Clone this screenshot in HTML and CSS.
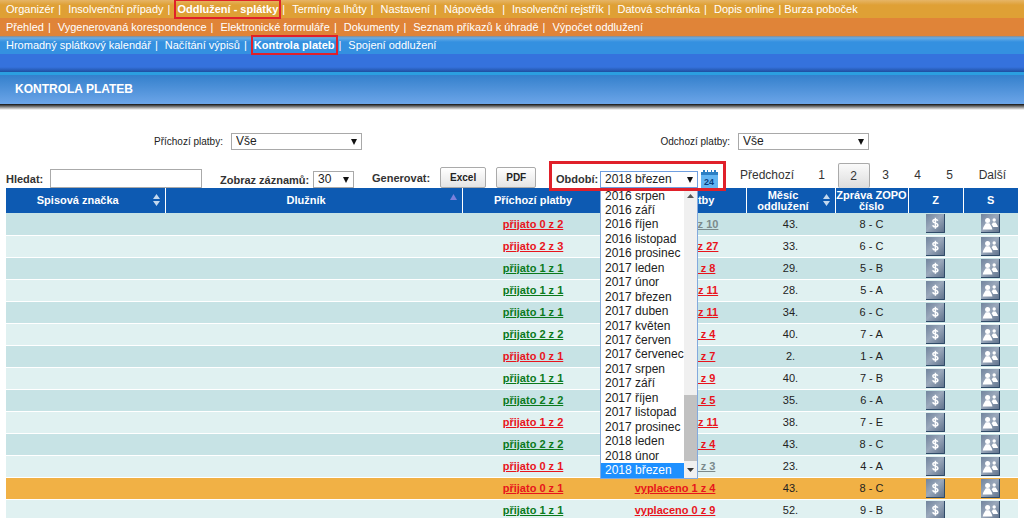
FILE: index.html
```html
<!DOCTYPE html>
<html lang="cs">
<head>
<meta charset="utf-8">
<title>Kontrola plateb</title>
<link rel="stylesheet" href="styles.css">
</head>
<body>
<svg class="sprite" aria-hidden="true">
  <defs>
    <linearGradient id="tile" x1="0" y1="0" x2="1" y2="1"><stop offset="0" stop-color="#71849d"/><stop offset=".45" stop-color="#9aa8bb"/><stop offset="1" stop-color="#5b6e88"/></linearGradient>
    <symbol id="pay" viewBox="0 0 19 19">
      <path fill="url(#tile)" d="M0 0h19v19H0z"/><path fill="none" stroke="#2f4a68" d="M0 18.500h18.500V0"/>
      <path fill="none" stroke="#fff" stroke-width="1.500" d="M11.800 6.800C11.300 5.700 10.400 5.500 9.300 5.500 7.900 5.500 6.900 6.100 6.900 7.200c0 2.500 5 1.400 5 3.900 0 1.300-1.100 1.900-2.500 1.900-1.400 0-2.400-.6-2.700-1.700M9.400 3.800v10.900"/>
    </symbol>
    <symbol id="people" viewBox="0 0 19 19">
      <path fill="url(#tile)" d="M0 0h19v19H0z"/><path fill="none" stroke="#2f4a68" d="M0 18.500h18.500V0"/>
      <g fill="#fff"><circle cx="6.600" cy="6.400" r="2.500"/><path d="M1.800 15.500c.2-2.600 1.800-3.800 3-6.200h3.600c1.200 2.400 2.800 3.600 3 6.200z"/><circle cx="13.200" cy="6" r="1.700"/><path d="M11.900 8.500h2.700c.9 1.600 2.300 2.700 2.400 4.500h-4.800c-.4-1-1-1.800-1.600-2.500.5-.7 1-1.300 1.300-2z"/></g>
    </symbol>
  </defs>
</svg>
<header>
  <nav class="menu menu-main">
    <a href="#">Organizér</a><i>|</i><a href="#">Insolvenční případy</a><i>|</i><a href="#" class="marked">Oddlužení - splátky</a><i>|</i><a href="#">Termíny a lhůty</a><i>|</i><a href="#">Nastavení</a><i>|</i><a href="#">Nápověda</a><i class="wide">|</i><a href="#">Insolvenční rejstřík</a><i>|</i><a href="#">Datová schránka</a><i>|</i><a href="#">Dopis online</a><i class="tight">|</i><a href="#">Burza poboček</a>
  </nav>
  <nav class="menu menu-sub">
    <a href="#">Přehled</a><i>|</i><a href="#">Vygenerovaná korespondence</a><i>|</i><a href="#">Elektronické formuláře</a><i>|</i><a href="#">Dokumenty</a><i>|</i><a href="#">Seznam příkazů k úhradě</a><i>|</i><a href="#">Výpočet oddlužení</a>
  </nav>
  <nav class="menu menu-page">
    <a href="#">Hromadný splátkový kalendář</a><i>|</i><a href="#">Načítání výpisů</a><i>|</i><a href="#" class="marked">Kontrola plateb</a><i>|</i><a href="#">Spojení oddlužení</a>
  </nav>
  <div class="band"></div>
  <h1>KONTROLA PLATEB</h1>
  <div class="shadow"></div>
</header>
<main>
  <div class="filters">
    <div class="filter"><label for="in">Příchozí platby:</label><span class="pick"><select id="in"><option>Vše</option></select></span></div>
    <div class="filter"><label for="out">Odchozí platby:</label><span class="pick"><select id="out"><option>Vše</option></select></span></div>
  </div>
  <div class="toolbar">
    <div class="search"><label for="q">Hledat:</label><input id="q" type="text"></div>
    <div class="count"><label for="n">Zobraz záznamů:</label><span class="pick"><select id="n"><option>30</option></select></span></div>
    <div class="export"><span>Generovat:</span><button type="button">Excel</button><button type="button">PDF</button></div>
    <div class="period">
      <label for="per">Období:</label>
      <div class="period-pick">
        <span class="pick"><select id="per"><option>2018 březen</option></select></span>
        <div class="popup">
          <ul class="options" role="listbox" aria-label="Období">
            <li role="option">2016 srpen</li><li role="option">2016 září</li><li role="option">2016 říjen</li><li role="option">2016 listopad</li><li role="option">2016 prosinec</li>
            <li role="option">2017 leden</li><li role="option">2017 únor</li><li role="option">2017 březen</li><li role="option">2017 duben</li><li role="option">2017 květen</li>
            <li role="option">2017 červen</li><li role="option">2017 červenec</li><li role="option">2017 srpen</li><li role="option">2017 září</li><li role="option">2017 říjen</li>
            <li role="option">2017 listopad</li><li role="option">2017 prosinec</li><li role="option">2018 leden</li><li role="option">2018 únor</li><li role="option" aria-selected="true" class="selected">2018 březen</li>
          </ul>
          <div class="scroll">
            <svg width="13" height="13" viewBox="0 0 13 13"><path fill="#555" d="M3 9l3.500-4L10 9z"/></svg>
            <div class="thumb"></div>
            <svg width="13" height="17" viewBox="0 0 13 17"><path fill="#333" d="M3 7l3.500 4L10 7z"/></svg>
          </div>
        </div>
      </div>
      <svg class="calendar" width="17" height="18" viewBox="0 0 17 18"><path fill="#2a7fc4" d="M0 2h17v4H0z"/><path fill="#2a7fc4" d="M2 0h2v3H2zM6 0h1v3H6zM10 0h1v3h-1zM13 0h2v3h-2z"/><path fill="#62b5f2" d="M0 5h17v13H0z"/><text x="8" y="15" text-anchor="middle">24</text></svg>
    </div>
    <nav class="pages"><a href="#" class="prev">Předchozí</a><a href="#" class="page">1</a><a href="#" class="page current">2</a><a href="#" class="page">3</a><a href="#" class="page">4</a><a href="#" class="page">5</a><a href="#" class="next">Další</a></nav>
  </div>
  <table>
    <colgroup><col class="c-file"><col class="c-debtor"><col class="c-pay"><col class="c-pay"><col class="c-month"><col class="c-report"><col class="c-icon"><col class="c-icon"></colgroup>
    <thead><tr>
      <th class="sortable">Spisová značka<svg class="sort" width="7" height="12" viewBox="0 0 7 12"><path fill="#c3d8ee" d="M0 5l3.500-5L7 5zM0 7h7l-3.500 5z"/></svg></th>
      <th class="sortable">Dlužník<svg class="sort" width="7" height="12" viewBox="0 0 7 12"><path fill="#7a80dc" d="M0 6l3.500-6L7 6z"/></svg></th>
      <th>Příchozí platby</th><th>Odchozí platby</th>
      <th class="sortable">Měsíc oddlužení<svg class="sort" width="7" height="12" viewBox="0 0 7 12"><path fill="#c3d8ee" d="M0 5l3.500-5L7 5zM0 7h7l-3.500 5z"/></svg></th>
      <th>Zpráva ZOPO číslo</th><th>Z</th><th>S</th>
    </tr></thead>
    <tbody>
      <tr><td></td><td></td><td><a href="#" class="bad">přijato 0 z 2</a></td><td><a href="#" class="none">vyplaceno 0 z 10</a></td><td>43.</td><td>8 - C</td><td><svg class="icon"><use href="#pay"/></svg></td><td><svg class="icon"><use href="#people"/></svg></td></tr>
      <tr><td></td><td></td><td><a href="#" class="bad">přijato 2 z 3</a></td><td><a href="#" class="bad">vyplaceno 0 z 27</a></td><td>33.</td><td>6 - C</td><td><svg class="icon"><use href="#pay"/></svg></td><td><svg class="icon"><use href="#people"/></svg></td></tr>
      <tr><td></td><td></td><td><a href="#" class="good">přijato 1 z 1</a></td><td><a href="#" class="bad">vyplaceno 0 z 8</a></td><td>29.</td><td>5 - B</td><td><svg class="icon"><use href="#pay"/></svg></td><td><svg class="icon"><use href="#people"/></svg></td></tr>
      <tr><td></td><td></td><td><a href="#" class="good">přijato 1 z 1</a></td><td><a href="#" class="bad">vyplaceno 0 z 11</a></td><td>28.</td><td>5 - A</td><td><svg class="icon"><use href="#pay"/></svg></td><td><svg class="icon"><use href="#people"/></svg></td></tr>
      <tr><td></td><td></td><td><a href="#" class="good">přijato 1 z 1</a></td><td><a href="#" class="bad">vyplaceno 0 z 11</a></td><td>34.</td><td>6 - C</td><td><svg class="icon"><use href="#pay"/></svg></td><td><svg class="icon"><use href="#people"/></svg></td></tr>
      <tr><td></td><td></td><td><a href="#" class="good">přijato 2 z 2</a></td><td><a href="#" class="bad">vyplaceno 0 z 4</a></td><td>40.</td><td>7 - A</td><td><svg class="icon"><use href="#pay"/></svg></td><td><svg class="icon"><use href="#people"/></svg></td></tr>
      <tr><td></td><td></td><td><a href="#" class="bad">přijato 0 z 1</a></td><td><a href="#" class="bad">vyplaceno 0 z 7</a></td><td>2.</td><td>1 - A</td><td><svg class="icon"><use href="#pay"/></svg></td><td><svg class="icon"><use href="#people"/></svg></td></tr>
      <tr><td></td><td></td><td><a href="#" class="good">přijato 1 z 1</a></td><td><a href="#" class="bad">vyplaceno 0 z 9</a></td><td>40.</td><td>7 - B</td><td><svg class="icon"><use href="#pay"/></svg></td><td><svg class="icon"><use href="#people"/></svg></td></tr>
      <tr><td></td><td></td><td><a href="#" class="good">přijato 2 z 2</a></td><td><a href="#" class="bad">vyplaceno 0 z 5</a></td><td>35.</td><td>6 - A</td><td><svg class="icon"><use href="#pay"/></svg></td><td><svg class="icon"><use href="#people"/></svg></td></tr>
      <tr><td></td><td></td><td><a href="#" class="bad">přijato 1 z 2</a></td><td><a href="#" class="bad">vyplaceno 0 z 11</a></td><td>38.</td><td>7 - E</td><td><svg class="icon"><use href="#pay"/></svg></td><td><svg class="icon"><use href="#people"/></svg></td></tr>
      <tr><td></td><td></td><td><a href="#" class="good">přijato 2 z 2</a></td><td><a href="#" class="bad">vyplaceno 0 z 4</a></td><td>43.</td><td>8 - C</td><td><svg class="icon"><use href="#pay"/></svg></td><td><svg class="icon"><use href="#people"/></svg></td></tr>
      <tr><td></td><td></td><td><a href="#" class="bad">přijato 0 z 1</a></td><td><a href="#" class="none">vyplaceno 0 z 3</a></td><td>23.</td><td>4 - A</td><td><svg class="icon"><use href="#pay"/></svg></td><td><svg class="icon"><use href="#people"/></svg></td></tr>
      <tr class="hover"><td></td><td></td><td><a href="#" class="bad">přijato 0 z 1</a></td><td><a href="#" class="bad">vyplaceno 1 z 4</a></td><td>43.</td><td>8 - C</td><td><svg class="icon"><use href="#pay"/></svg></td><td><svg class="icon"><use href="#people"/></svg></td></tr>
      <tr><td></td><td></td><td><a href="#" class="good">přijato 1 z 1</a></td><td><a href="#" class="bad">vyplaceno 0 z 9</a></td><td>52.</td><td>9 - B</td><td><svg class="icon"><use href="#pay"/></svg></td><td><svg class="icon"><use href="#people"/></svg></td></tr>
    </tbody>
  </table>
</main>
</body>
</html>
```
FILE: styles.css
```css
* { box-sizing: border-box; }
html { overflow: hidden; }
body { margin: 0; background: #fff; color: #222; font: 11px/14px "Liberation Sans", Arial, sans-serif; }
a { color: inherit; text-decoration: none; }
.sprite { position: absolute; width: 0; height: 0; }

.menu { display: flex; align-items: center; padding-left: 6px; height: 18px; color: #fff; white-space: nowrap; }
.menu i { font-style: normal; margin: 0 7px 0 4px; }
.menu .wide { margin-left: 8px; }
.menu .tight { margin-right: 3px; }
.menu-main { background: linear-gradient(#e6b566, #dfa035 5px); }
.menu-sub { background: #e08438; }
.menu-page { background: linear-gradient(#8d8a8c, #66ace6 2px, #3490e0 6px); }
.marked { font-weight: bold; outline: 2px solid #e0202a; outline-offset: 1px; }
.band { height: 18px; background: linear-gradient(#3572dd 13px, #1f4f9f 18px); }
h1 { margin: 0; padding: 0 15px; border-top: 3px solid #2b9fe0; font-size: 12px; line-height: 29px; color: #fff; background: linear-gradient(#3480cc, #6ca5e8); }
.shadow { height: 6px; background: linear-gradient(#111, #888 3px, #fff); }

main { padding: 0 6px; }
.filters { display: flex; padding: 23px 149px 0 148px; justify-content: space-between; font-size: 10px; }
.filter { display: flex; align-items: center; gap: 8px; }
.filter .pick { width: 131px; }

.pick { position: relative; display: block; }
.pick::after { content: ""; position: absolute; right: 5px; top: 6px; border: solid transparent; border-width: 6px 3px 0; border-top-color: #111; }
select { appearance: none; display: block; width: 100%; height: 17px; padding: 0 4px; border: 1px solid #a9a9a9; border-radius: 0; background: #fff; color: #222; font: 12px/15px "Liberation Sans", Arial, sans-serif; }

.toolbar { display: flex; align-items: flex-end; height: 38px; font-size: 12px; color: #333; white-space: nowrap; }
.toolbar label, .export span { font-size: 11px; font-weight: bold; }
.search, .count, .export, .period { display: flex; align-items: center; justify-content: space-between; }
.search { width: 196px; margin-right: 18px; }
.search input { width: 152px; height: 19px; border: 1px solid #aaa; padding: 0 4px; }
.count { width: 134px; margin-right: 18px; }
.count .pick { width: 41px; }
.export { width: 162px; margin-right: 15px; gap: 10px; }
.export span { margin-right: auto; }
.export button { height: 21px; padding: 0 9px; border: 1px solid #aaa; border-radius: 2px; background: linear-gradient(#fff, #e4e4e4); font: bold 10px "Liberation Sans", Arial, sans-serif; color: #222; }
.period { position: relative; width: 177px; padding-left: 7px; }
.period::after { content: ""; position: absolute; inset: -9px 0 -3px; border: 3px solid #e0202a; z-index: 3; pointer-events: none; }
.period-pick { position: relative; width: 98px; margin: 0 3px 0 auto; }
.period-pick select { border-color: #6f9fe0; }
.calendar { margin-right: 8px; }
.calendar text { font: bold 9px "Liberation Sans", Arial, sans-serif; fill: #073f80; }
.popup { position: absolute; z-index: 2; top: 100%; left: 0; width: 98px; height: 291px; display: flex; background: #fff; border: 1px solid #83a9dd; }
.options { flex: 1; display: flex; flex-direction: column; margin: 0; padding: 0; list-style: none; color: #222; font-size: 12px; }
.options li { flex: 1; padding-left: 4px; line-height: 14px; }
.options .selected { background: #1e90ff; color: #fff; }
.scroll { display: flex; flex-direction: column; width: 13px; background: #f0f0f0; }
.thumb { flex: none; height: 66px; margin-top: auto; background: #c1c1c1; }
.pages { flex: 1; display: flex; align-items: center; padding: 0 12px 0 14px; line-height: 25px; }
.prev { margin-right: auto; }
.page { width: 32px; text-align: center; }
.next { margin-left: 13px; }
.current { line-height: 24px; border: 1px solid #aaa; border-bottom: 0; border-radius: 2px; background: linear-gradient(#fafafa, #ddd); }

table { width: 100%; table-layout: fixed; border-collapse: collapse; text-align: center; }
.c-file { width: 159px; }
.c-pay { width: 142px; }
.c-month { width: 89px; }
.c-report { width: 73px; }
.c-icon { width: 55px; }
th { position: relative; height: 25px; padding: 0; background: #0d5ab2; color: #fff; border-right: 1px solid #fff; line-height: 11px; }
th:last-child { border-right: 0; }
.sortable { padding: 0 15px 0 0; }
.sort { position: absolute; right: 5px; top: 6px; }
td { height: 22px; padding: 0; border-bottom: 1px solid #fff; line-height: 14px; }
tbody tr:nth-child(odd) { background: #c7e3e5; }
tbody tr:nth-child(even) { background: #e0f1f1; }
tbody tr.hover { background: #f1b145; }
tbody tr.hover + tr { background: #e0f1f1; }
td a { font-weight: bold; text-decoration: underline; }
.bad { color: #e8141c; }
.good { color: #0b7a1c; }
.none { color: #7b8a8c; }
.icon { display: block; width: 19px; height: 19px; margin: 0 auto; }
```
